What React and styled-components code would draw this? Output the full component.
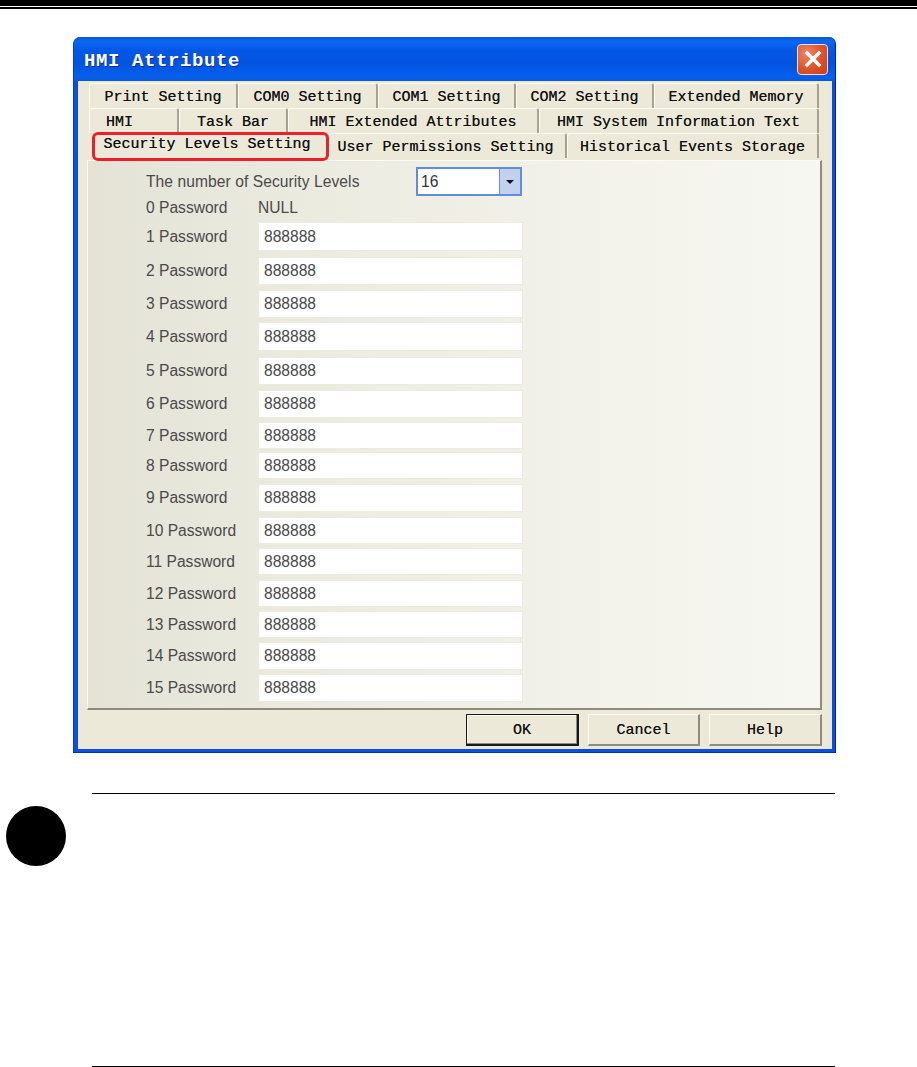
import styled, { createGlobalStyle } from "styled-components"

const GlobalStyle = createGlobalStyle`
  html, body {
    margin: 0;
    padding: 0;
    background: #fff;
  }
`

const tabRows = [
  [
    { label: "Print Setting", width: 149 },
    { label: "COM0 Setting", width: 140 },
    { label: "COM1 Setting", width: 138 },
    { label: "COM2 Setting", width: 138 },
    { label: "Extended Memory", width: 165 },
  ],
  [
    { label: "HMI", width: 90, pad: 28 },
    { label: "Task Bar", width: 109 },
    { label: "HMI Extended Attributes", width: 251 },
    { label: "HMI System Information Text", width: 280 },
  ],
]

const lastRow = [
  { label: "User Permissions Setting", width: 238, pad: 4 },
  { label: "Historical Events Storage", width: 252 },
]

// height of each input and the space left under it
const passwords = [
  [29, 6], [28, 5], [28, 4], [29, 6], [28, 5],
  [28, 4], [27, 3], [27, 5], [28, 5], [27, 4],
  [27, 5], [27, 4], [27, 4], [28, 4], [28, 0],
]

const App = () => {
  return (
    <Page>
      <GlobalStyle />
      <TopRule />
      <Dialog>
        <TitleBar>
          <Title>HMI Attribute</Title>
          <CloseButton>
            <svg width="20" height="20" viewBox="0 0 20 20">
              <path d="M4 4L16 16M16 4L4 16" stroke="#fff" strokeWidth="3.4" strokeLinecap="square" fill="none" />
            </svg>
          </CloseButton>
        </TitleBar>
        <DialogBody>
          <Tabs>
            {tabRows.map((row, i) => (
              <TabRow key={i}>
                {row.map((tab) => (
                  <Tab key={tab.label} $width={tab.width} $pad={tab.pad}>{tab.label}</Tab>
                ))}
              </TabRow>
            ))}
            <TabRow>
              <ActiveTab>Security Levels Setting</ActiveTab>
              {lastRow.map((tab) => (
                <Tab key={tab.label} $width={tab.width} $pad={tab.pad}>{tab.label}</Tab>
              ))}
            </TabRow>
          </Tabs>
          <Panel>
            <ComboRow>
              <ComboLabel>The number of Security Levels</ComboLabel>
              <Combo>
                <ComboValue>16</ComboValue>
                <ComboArrow />
              </Combo>
            </ComboRow>
            <NullRow>
              <Label>0 Password</Label>
              <span>NULL</span>
            </NullRow>
            {passwords.map(([height, gap], i) => (
              <PasswordRow key={i} $gap={gap}>
                <Label>{i + 1} Password</Label>
                <PasswordField $height={height}>888888</PasswordField>
              </PasswordRow>
            ))}
          </Panel>
          <Footer>
            <DefaultButton>OK</DefaultButton>
            <Button $width={112}>Cancel</Button>
            <Button>Help</Button>
          </Footer>
        </DialogBody>
      </Dialog>
      <Note>
        <Bullet />
        <NoteBox />
      </Note>
    </Page>
  )
}

export default App

const Page = styled.div`
  width: 917px;
  height: 1067px;
  overflow: hidden;
  background: #fff;
`

const TopRule = styled.div`
  height: 6px;
  background: #000;
  border-bottom: 1px solid #fff;
  box-shadow: 0 2px 0 #000;
  margin-bottom: 30px;
`

const Dialog = styled.div`
  width: 763px;
  height: 716px;
  margin-left: 73px;
  display: flex;
  flex-direction: column;
  box-sizing: border-box;
  background: #0a4fdf;
  border-radius: 7px 7px 0 0;
  border-left: 1px solid #0a3bd0;
  border-right: 1px solid #0220a8;
  border-bottom: 1px solid #0030b8;
`

const TitleBar = styled.div`
  height: 44px;
  flex-shrink: 0;
  display: flex;
  align-items: center;
  justify-content: space-between;
  padding: 0 7px 0 10px;
  border-radius: 7px 7px 0 0;
  background: linear-gradient(180deg, #0a55d8 0%, #0a68f2 10%, #0458e6 30%, #0452e0 60%, #0560ee 90%, #0a58d8 100%);
`

const Title = styled.div`
  margin-top: 3px;
  font-family: "Liberation Mono", monospace;
  font-weight: 700;
  font-size: 19px;
  letter-spacing: 0.6px;
  color: #fff;
  text-shadow: 1px 1px 0 #0a2f9c;
`

const CloseButton = styled.div`
  width: 31px;
  height: 31px;
  box-sizing: border-box;
  display: flex;
  align-items: center;
  justify-content: center;
  border: 1px solid #f4dcd4;
  border-radius: 4px;
  background: radial-gradient(circle at 30% 30%, #ea8a66 0%, #e0552c 50%, #cf3a14 100%);
`

const DialogBody = styled.div`
  flex: 1;
  display: flex;
  flex-direction: column;
  margin: 0 3px 3px 4px;
  padding: 2px 10px 0 9px;
  background: #ece9d8;
  min-height: 0;
`

const Tabs = styled.div`
  display: flex;
  flex-direction: column;
  height: 77px;
  flex-shrink: 0;
`

const TabRow = styled.div`
  display: flex;
  height: 25px;
  padding-left: 2px;

  &:last-child {
    height: 27px;
    padding-left: 5px;
    position: relative;
    z-index: 1;
  }
`

const Tab = styled.div`
  width: ${(p) => p.$width}px;
  box-sizing: border-box;
  height: 25px;
  display: flex;
  align-items: center;
  justify-content: center;
  padding-top: 2px;
  padding-right: ${(p) => p.$pad || 0}px;
  font-family: "Liberation Mono", monospace;
  font-size: 15px;
  color: #111;
  text-shadow: 0 0 0.5px #444;
  background: #ece9d8;
  border-top: 1px solid #fbfaf4;
  border-left: 1px solid #fbfaf4;
  border-right: 2px solid #a5a292;
  border-radius: 3px 3px 0 0;
`

const ActiveTab = styled.div`
  width: 237px;
  height: 29px;
  margin-top: -1px;
  box-sizing: border-box;
  display: flex;
  align-items: center;
  justify-content: center;
  font-family: "Liberation Mono", monospace;
  font-size: 15px;
  color: #111;
  text-shadow: 0 0 0.5px #444;
  background: #ece9d8;
  border: 3px solid #ec1f2a;
  border-radius: 6px;
  padding: 0 7px 4px 0;
`

const Panel = styled.div`
  height: 550px;
  flex-shrink: 0;
  box-sizing: border-box;
  padding: 6px 0 0 58px;
  font-family: "Liberation Sans", Arial, sans-serif;
  font-size: 15.6px;
  color: #4a4a4a;
  background: linear-gradient(90deg, #e4e3d6 0%, #eeede3 40%, #f7f7f2 100%);
  border-top: 1px solid #fbfaf4;
  border-left: 1px solid #fbfaf4;
  border-right: 2px solid #8f8c7e;
  border-bottom: 2px solid #8f8c7e;
`

const ComboRow = styled.div`
  display: flex;
  align-items: center;
  height: 29px;
`

const ComboLabel = styled.div`
  width: 270px;
  letter-spacing: 0.07px;
`

const Combo = styled.div`
  width: 106px;
  height: 29px;
  box-sizing: border-box;
  display: flex;
  border: 2px solid #5f8fdc;
  background: #fff;
`

const ComboValue = styled.div`
  flex: 1;
  display: flex;
  align-items: center;
  padding-left: 3px;
  color: #333;
`

const ComboArrow = styled.div`
  width: 20px;
  border-left: 1px solid #5f8fdc;
  background: #c0d2ee;
  position: relative;

  &::after {
    content: "";
    position: absolute;
    left: 6px;
    top: 11px;
    border-left: 4px solid transparent;
    border-right: 4px solid transparent;
    border-top: 4px solid #111;
  }
`

const Label = styled.div`
  width: 112px;
  flex-shrink: 0;
`

const NullRow = styled.div`
  display: flex;
  align-items: center;
  height: 24px;
  padding-bottom: 2px;
`

const PasswordRow = styled.div`
  display: flex;
  align-items: center;
  margin-bottom: ${(p) => p.$gap}px;
`

const PasswordField = styled.div`
  width: 265px;
  height: ${(p) => p.$height}px;
  box-sizing: border-box;
  display: flex;
  align-items: center;
  padding-left: 5px;
  background: #fff;
  border: 1px solid #ecebdf;
`

const Footer = styled.div`
  display: flex;
  justify-content: flex-end;
  gap: 9px;
  padding-top: 4px;
`

const Button = styled.div`
  width: ${(p) => p.$width || 113}px;
  height: 32px;
  box-sizing: border-box;
  display: flex;
  align-items: center;
  justify-content: center;
  padding-top: 1px;
  font-family: "Liberation Mono", monospace;
  font-size: 15px;
  color: #111;
  text-shadow: 0 0 0.5px #444;
  background: #ece9d8;
  border-top: 1px solid #fbfaf4;
  border-left: 1px solid #fbfaf4;
  border-right: 2px solid #8f8c7e;
  border-bottom: 2px solid #8f8c7e;
`

const DefaultButton = styled(Button)`
  border-color: #1a1a1a;
  border-width: 1px 2px 2px 1px;
  box-shadow: inset -1px -1px 0 #8f8c7e, inset 1px 1px 0 #fbfaf4;
`

const Note = styled.div`
  display: flex;
  margin-top: 40px;
  padding-left: 6px;
  gap: 26px;
`

const Bullet = styled.div`
  width: 60px;
  height: 60px;
  margin-top: 13px;
  border-radius: 50%;
  background: #000;
  flex-shrink: 0;
`

const NoteBox = styled.div`
  width: 743px;
  height: 274px;
  box-sizing: border-box;
  border-top: 1px solid #000;
  border-bottom: 1px solid #000;
`
